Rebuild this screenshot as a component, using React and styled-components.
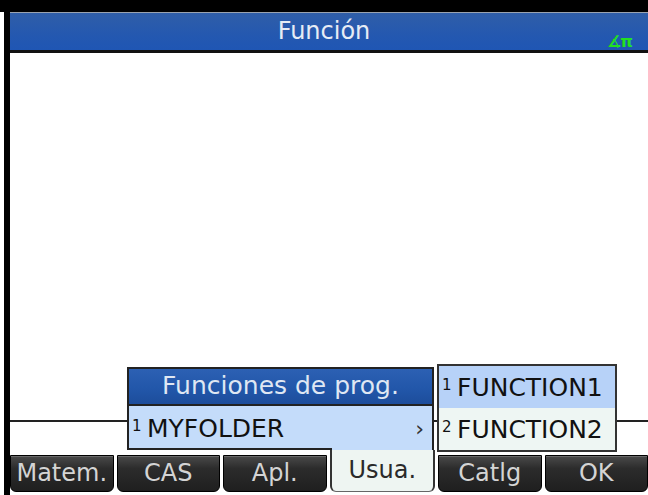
import React from "react";
import styled, { createGlobalStyle } from "styled-components";

const GlobalStyle = createGlobalStyle`
  html, body { margin: 0; padding: 0; background: #fff; }
  body { font-family: "DejaVu Sans", "Liberation Sans", sans-serif; }
  #root { width: 648px; height: 495px; }
  * { box-sizing: border-box; }
`;

const Frame = styled.div`
  width: 648px;
  height: 495px;
  display: flex;
  flex-direction: column;
  border-top: 12px solid #000;
  background: #fff;
  overflow: hidden;
`;

const Screen = styled.div`
  flex: 1;
  margin-left: 4px;
  border-left: 6px solid #000;
  display: flex;
  flex-direction: column;
  min-height: 0;
`;

const TitleBar = styled.div`
  position: relative;
  height: 41px;
  flex: none;
  border-top: 1px solid #9aa3b0;
  border-bottom: 3px solid #111;
  background: linear-gradient(#2f5ea8, #2458b0 60%, #1f56b4);
  color: #e6ecf5;
  font-size: 24px;
  display: flex;
  align-items: center;
  justify-content: center;
  padding-right: 10px;
  padding-bottom: 2px;
`;

const AngleMode = styled.span`
  position: absolute;
  right: 16px;
  bottom: 0px;
  font-size: 16px;
  font-weight: bold;
  color: #22e022;
  letter-spacing: -1px;
  line-height: 16px;
`;

const Canvas = styled.div`
  position: relative;
  flex: 1;
  display: flex;
  flex-direction: column;
  justify-content: flex-end;
`;

const AxisLine = styled.div`
  height: 2px;
  background: #222;
  margin-bottom: 28px;
`;

const Menu = styled.div`
  position: absolute;
  left: 117px;
  bottom: 0;
  width: 307px;
  border: 2px solid #222;
  border-bottom: none;
  display: flex;
  flex-direction: column;
  &::after {
    content: "";
    position: absolute;
    left: -2px;
    bottom: 0;
    width: 205px;
    height: 2px;
    background: #222;
  }
`;

const MenuHeader = styled.div`
  height: 37px;
  border-bottom: 2px solid #222;
  background: linear-gradient(#2c60b3, #2257aa 55%, #1d4d9b);
  color: #dfe7f3;
  font-size: 25px;
  display: flex;
  align-items: center;
  justify-content: center;
  padding-bottom: 2px;
`;

const Row = styled.div`
  height: ${(p) => p.$h}px;
  background: ${(p) => p.$bg};
  display: flex;
  align-items: center;
  padding-left: 3px;
  color: #111;
`;

const Num = styled.span`
  font-size: 15px;
  width: 15px;
  margin-bottom: 4px;
  color: #111;
`;

const Label = styled.span`
  flex: 1;
  font-size: 25px;
`;

const Chevron = styled.span`
  font-size: 22px;
  color: #333;
  margin-right: 8px;
`;

const SubMenu = styled.div`
  position: absolute;
  left: 427px;
  bottom: -2px;
  width: 180px;
  border: 2px solid #333;
  display: flex;
  flex-direction: column;
`;

const SoftRow = styled.div`
  height: 45px;
  flex: none;
  display: flex;
  gap: 3px;
  padding-bottom: 3px;
  align-items: stretch;
`;

const Key = styled.div`
  flex: 1;
  margin-top: ${(p) => (p.$active ? "0" : "5px")};
  border-radius: 0 0 6px 6px;
  font-size: 24px;
  display: flex;
  align-items: center;
  justify-content: center;
  padding-bottom: 2px;
  ${(p) =>
    p.$active
      ? `
    background: #eef5f2;
    color: #2a2a2a;
    border-left: 2px solid #333;
    border-right: 2px solid #333;
    border-bottom: 1px solid #666;
  `
      : `
    background: linear-gradient(#4a4a4a, #2c2c2c 35%, #1f1f1f);
    color: #d4d4d4;
    border: 1px solid #000;
    box-shadow: inset 0 1px 0 #6a6a6a;
  `}
`;

const keys = ["Matem.", "CAS", "Apl.", "Usua.", "Catlg", "OK"];

export default function App() {
  return (
    <>
      <GlobalStyle />
      <Frame>
        <Screen>
          <TitleBar>
            Función
            <AngleMode>∡π</AngleMode>
          </TitleBar>
          <Canvas>
            <AxisLine />
            <Menu>
              <MenuHeader>Funciones de prog.</MenuHeader>
              <Row $h={44} $bg="#c4dcfa">
                <Num>1</Num>
                <Label>MYFOLDER</Label>
                <Chevron>›</Chevron>
              </Row>
            </Menu>
            <SubMenu>
              <Row $h={42} $bg="#b7d2f8">
                <Num>1</Num>
                <Label>FUNCTION1</Label>
              </Row>
              <Row $h={42} $bg="#eef6f3">
                <Num>2</Num>
                <Label>FUNCTION2</Label>
              </Row>
            </SubMenu>
          </Canvas>
          <SoftRow>
            {keys.map((k) => (
              <Key key={k} $active={k === "Usua."}>
                {k}
              </Key>
            ))}
          </SoftRow>
        </Screen>
      </Frame>
    </>
  );
}
